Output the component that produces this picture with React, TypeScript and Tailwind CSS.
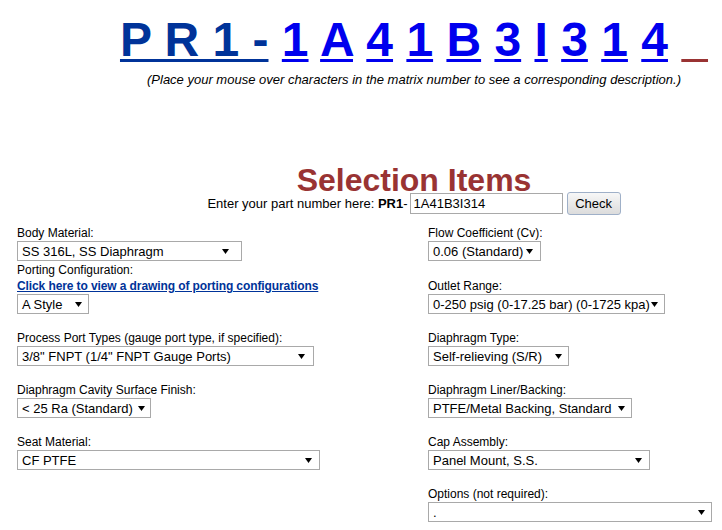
import React from "react";

const Arrow = () => (
  <svg width="7" height="5" viewBox="0 0 7 5" className="shrink-0">
    <path d="M0 0H7L3.5 5Z" fill="#000" />
  </svg>
);

function Select({ text, cls }: { text: string; cls: string }) {
  return (
    <div
      className={`flex h-[20px] items-center justify-between border border-[#a9a9a9] bg-white pl-[4px] text-[13px] leading-none text-black ${cls}`}
    >
      <span className="whitespace-pre">{text}</span>
      <Arrow />
    </div>
  );
}

function Label({ children, cls = "" }: { children: React.ReactNode; cls?: string }) {
  return <div className={`h-[16px] text-[12px] leading-[16px] text-black ${cls}`}>{children}</div>;
}

export default function App() {
  const chars = ["1", "A", "4", "1", "B", "3", "I", "3", "1", "4"];
  return (
    <div
      className="h-[530px] w-[722px] overflow-hidden bg-white"
      style={{ fontFamily: '"Liberation Sans", Arial, sans-serif' }}
    >
      <div className="w-[828px]">
        <div className="pt-[12px] text-center text-[48px] font-bold leading-[56px] whitespace-pre">
          <a className="text-[#003399] underline decoration-[3px] underline-offset-[3px]">P R 1 -</a>
          {chars.map((c, i) => (
            <React.Fragment key={i}>
              {" "}
              <a className="text-[#0000ee] underline decoration-[3px] underline-offset-[3px]">{c}</a>
            </React.Fragment>
          ))}
          {" "}
          <a className="text-[#993333] underline decoration-[3px] underline-offset-[3px]">{"\u2007"}</a>
        </div>
        <div className="mt-[4px] text-center text-[13px] italic leading-[15px] text-black">
          (Place your mouse over characters in the matrix number to see a corresponding description.)
        </div>
        <div className="mt-[80px] h-[26px] text-center text-[32px] font-bold leading-[26px] text-[#993333]">
          Selection Items
        </div>
        <div className="-mt-[1px] flex h-[23px] items-center justify-center text-[13px] text-black">
          <span className="whitespace-pre">Enter your part number here: </span>
          <span className="font-bold">PR1</span>
          <span>-</span>
          <div className="ml-[2px] flex h-[21px] w-[153px] items-center border border-[#a9a9a9] bg-white pl-[3px] text-[13px]">
            1A41B3I314
          </div>
          <div className="ml-[4px] flex h-[23px] w-[54px] items-center justify-center rounded-[3px] border border-[#9fb0c8] bg-linear-to-b from-[#f7f7f7] to-[#dcdcdc] text-[13px]">
            Check
          </div>
        </div>

        <div className="mt-[10px] flex">
          <div className="w-[428px] shrink-0 pl-[17px]">
            <Label>Body Material:</Label>
            <Select text="SS 316L, SS Diaphragm" cls="w-[225px] pr-[12px]" />
            <Label cls="mt-[1px]">Porting Configuration:</Label>
            <div className="h-[16px] text-[12px] leading-[16px]">
              <a className="font-bold tracking-[-0.1px] text-[#003399] underline">
                Click here to view a drawing of porting configurations
              </a>
            </div>
            <Select text="A Style" cls="w-[72px] pr-[6px]" />
            <Label cls="mt-[16px]">Process Port Types (gauge port type, if specified):</Label>
            <Select text={'3/8" FNPT (1/4" FNPT Gauge Ports)'} cls="w-[297px] pr-[8px]" />
            <Label cls="mt-[16px]">Diaphragm Cavity Surface Finish:</Label>
            <Select text="< 25 Ra (Standard)" cls="w-[134px] pr-[5px]" />
            <Label cls="mt-[16px]">Seat Material:</Label>
            <Select text="CF PTFE" cls="w-[303px] pr-[7px]" />
          </div>
          <div className="flex-1">
            <Label>Flow Coefficient (Cv):</Label>
            <Select text="0.06 (Standard)" cls="w-[113px] pr-[7px]" />
            <Label cls="mt-[17px]">Outlet Range:</Label>
            <Select text="0-250 psig (0-17.25 bar) (0-1725 kpa)" cls="w-[237px] pr-[6px]" />
            <Label cls="mt-[16px]">Diaphragm Type:</Label>
            <Select text="Self-relieving (S/R)" cls="w-[141px] pr-[6px]" />
            <Label cls="mt-[16px]">Diaphragm Liner/Backing:</Label>
            <Select text="PTFE/Metal Backing, Standard" cls="w-[204px] pr-[6px]" />
            <Label cls="mt-[16px]">Cap Assembly:</Label>
            <Select text="Panel Mount, S.S." cls="w-[222px] pr-[7px]" />
            <Label cls="mt-[16px]">Options (not required):</Label>
            <Select text="." cls="w-[284px] pr-[6px]" />
          </div>
        </div>
      </div>
    </div>
  );
}
